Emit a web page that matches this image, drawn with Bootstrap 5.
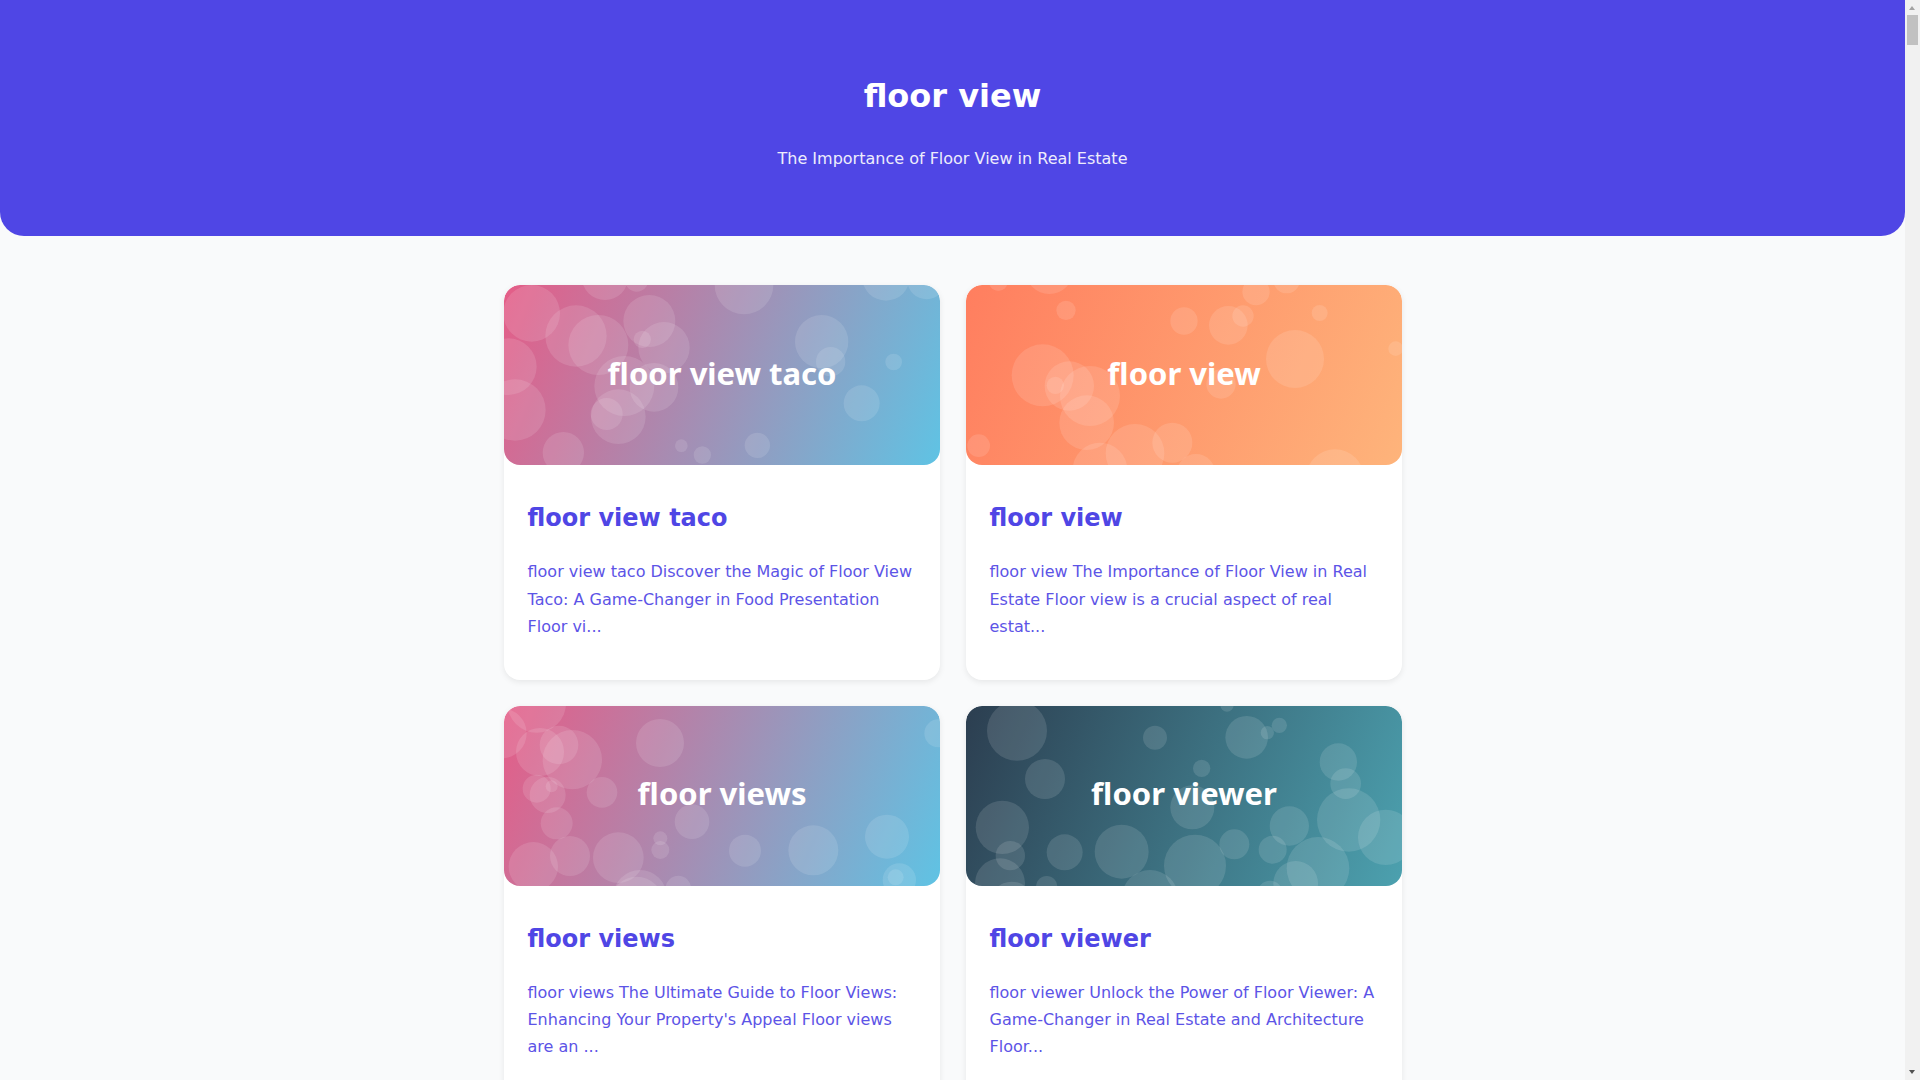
<!DOCTYPE html>
<html lang="en">
<head>
<meta charset="utf-8">
<title>floor view</title>
<link href="https://cdn.jsdelivr.net/npm/bootstrap@5.3.0/dist/css/bootstrap.min.css" rel="stylesheet">
<style>
body { background: #f9fafb; font-family: "DejaVu Sans", sans-serif; color: #4f46e5; line-height: 1.7; padding-right: 15px; }
.site-head { background: #4f46e5; color: #fff; border-radius: 0 0 24px 24px; height: 236px; padding-top: 13px; }
.site-head h1 { font-size: 32px; font-weight: 700; line-height: 1.2; margin: 0 0 29px; }
.site-head p { font-size: 16px; margin: 0; opacity: .9; }
.post-wrap { width: 898px; margin: 49px auto 0; display: grid; grid-template-columns: 1fr 1fr; gap: 25.6px 26px; }
.post { background: #fff; border-radius: 16px; box-shadow: 0 2px 6px rgba(0,0,0,.08); overflow: hidden; }
.post svg { display: block; width: 100%; height: 180px; border-radius: 16px; }
.post svg text { font-family: "Noto Sans", sans-serif; font-weight: 700; font-size: 93px; fill: #fff; text-anchor: middle; }
.post svg circle { fill: #fff; fill-opacity: .12; }
.post-body { padding: 24px; height: 215px; }
.post-body h2 { font-size: 24px; font-weight: 700; line-height: 1.2; margin: 15.2px 0 25.4px; color: #4f46e5; }
.post-body p { font-size: 16px; margin: 0; line-height: 27.2px; opacity: .92; }
.fake-scroll { position: fixed; top: 0; right: 0; width: 15px; height: 1080px; background: #f1f1f1; }
.fake-scroll i { display: block; position: absolute; left: 4px; width: 0; height: 0; border-left: 3.5px solid transparent; border-right: 3.5px solid transparent; }
.fake-scroll .arrow-up { top: 6px; border-bottom: 4px solid #a3a3a3; }
.fake-scroll .arrow-down { bottom: 6px; border-top: 4px solid #505050; }
.fake-scroll b { display: block; position: absolute; top: 15px; left: 2px; width: 11px; height: 30px; background: #c1c1c1; }
</style>
</head>
<body>
<header class="site-head d-flex flex-column align-items-center justify-content-center text-center">
  <h1>floor view</h1>
  <p>The Importance of Floor View in Real Estate</p>
</header>
<main class="post-wrap">
  <article class="post">
    <svg viewBox="72 75 1308 540" preserveAspectRatio="none" role="img" aria-label="floor view taco">
      <defs><linearGradient id="g1" gradientUnits="userSpaceOnUse" x1="72" y1="75" x2="1380" y2="615"><stop offset="0" stop-color="#e55d87"/><stop offset="1" stop-color="#5fc3e4"/></linearGradient></defs>
      <rect x="72" y="75" width="1308" height="540" fill="url(#g1)"/>
      <circle cx="155" cy="160" r="85"/><circle cx="288" cy="228" r="92"/><circle cx="355" cy="255" r="90"/><circle cx="508" cy="183" r="78"/><circle cx="552" cy="263" r="77"/><circle cx="487" cy="238" r="26"/><circle cx="375" cy="50" r="70"/><circle cx="470" cy="60" r="35"/><circle cx="792" cy="75" r="88"/><circle cx="1025" cy="245" r="80"/><circle cx="1052" cy="305" r="44"/><circle cx="1241" cy="306" r="25"/><circle cx="1218" cy="50" r="72"/><circle cx="1340" cy="60" r="58"/><circle cx="85" cy="320" r="85"/><circle cx="105" cy="450" r="92"/><circle cx="433" cy="378" r="90"/><circle cx="522" cy="382" r="73"/><circle cx="415" cy="470" r="82"/><circle cx="380" cy="462" r="48"/><circle cx="250" cy="578" r="62"/><circle cx="604" cy="557" r="19"/><circle cx="667" cy="585" r="26"/><circle cx="832" cy="556" r="38"/><circle cx="1145" cy="430" r="54"/>
      <text x="726" y="375">floor view taco</text>
    </svg>
    <div class="post-body">
      <h2>floor view taco</h2>
      <p>floor view taco Discover the Magic of Floor View Taco: A Game-Changer in Food Presentation Floor vi...</p>
    </div>
  </article>
  <article class="post">
    <svg viewBox="48 75 1308 540" preserveAspectRatio="none" role="img" aria-label="floor view">
      <defs><linearGradient id="g2" gradientUnits="userSpaceOnUse" x1="48" y1="75" x2="1356" y2="615"><stop offset="0" stop-color="#ff7e5f"/><stop offset="1" stop-color="#feb47b"/></linearGradient></defs>
      <rect x="48" y="75" width="1308" height="540" fill="url(#g2)"/>
      <circle cx="145" cy="65" r="28"/><circle cx="298" cy="30" r="72"/><circle cx="348" cy="151" r="29"/><circle cx="702" cy="183" r="41"/><circle cx="835" cy="196" r="58"/><circle cx="879" cy="168" r="32"/><circle cx="918" cy="95" r="41"/><circle cx="1010" cy="60" r="40"/><circle cx="1109" cy="159" r="24"/><circle cx="1035" cy="297" r="87"/><circle cx="1337" cy="266" r="22"/><circle cx="278" cy="346" r="93"/><circle cx="358" cy="378" r="74"/><circle cx="420" cy="408" r="90"/><circle cx="316" cy="376" r="26"/><circle cx="410" cy="488" r="82"/><circle cx="813" cy="372" r="44"/><circle cx="555" cy="580" r="88"/><circle cx="667" cy="548" r="60"/><circle cx="450" cy="630" r="82"/><circle cx="738" cy="640" r="58"/><circle cx="1155" cy="655" r="87"/><circle cx="86" cy="557" r="34"/>
      <text x="702" y="375">floor view</text>
    </svg>
    <div class="post-body">
      <h2>floor view</h2>
      <p>floor view The Importance of Floor View in Real Estate Floor view is a crucial aspect of real estat...</p>
    </div>
  </article>
  <article class="post">
    <svg viewBox="72 48 1308 540" preserveAspectRatio="none" role="img" aria-label="floor views">
      <defs><linearGradient id="g3" gradientUnits="userSpaceOnUse" x1="72" y1="48" x2="1380" y2="588"><stop offset="0" stop-color="#e55d87"/><stop offset="1" stop-color="#5fc3e4"/></linearGradient></defs>
      <rect x="72" y="48" width="1308" height="540" fill="url(#g3)"/>
      <circle cx="170" cy="40" r="88"/><circle cx="65" cy="130" r="75"/><circle cx="180" cy="186" r="72"/><circle cx="237" cy="165" r="58"/><circle cx="277" cy="209" r="89"/><circle cx="540" cy="159" r="72"/><circle cx="1375" cy="130" r="42"/><circle cx="170" cy="296" r="42"/><circle cx="203" cy="315" r="54"/><circle cx="215" cy="289" r="18"/><circle cx="366" cy="307" r="46"/><circle cx="230" cy="400" r="48"/><circle cx="636" cy="395" r="52"/><circle cx="541" cy="445" r="21"/><circle cx="541" cy="480" r="27"/><circle cx="795" cy="482" r="48"/><circle cx="1000" cy="481" r="75"/><circle cx="1221" cy="440" r="66"/><circle cx="160" cy="530" r="74"/><circle cx="270" cy="498" r="60"/><circle cx="415" cy="503" r="76"/><circle cx="480" cy="620" r="80"/><circle cx="470" cy="640" r="80"/><circle cx="595" cy="595" r="38"/><circle cx="1258" cy="570" r="50"/><circle cx="1247" cy="562" r="24"/>
      <text x="726" y="346">floor views</text>
    </svg>
    <div class="post-body">
      <h2>floor views</h2>
      <p>floor views The Ultimate Guide to Floor Views: Enhancing Your Property's Appeal Floor views are an ...</p>
    </div>
  </article>
  <article class="post">
    <svg viewBox="48 48 1308 540" preserveAspectRatio="none" role="img" aria-label="floor viewer">
      <defs><linearGradient id="g4" gradientUnits="userSpaceOnUse" x1="48" y1="48" x2="1356" y2="588"><stop offset="0" stop-color="#2c3e50"/><stop offset="1" stop-color="#4ca1af"/></linearGradient></defs>
      <rect x="48" y="48" width="1308" height="540" fill="url(#g4)"/>
      <circle cx="201" cy="122" r="90"/><circle cx="285" cy="267" r="60"/><circle cx="157" cy="412" r="80"/><circle cx="181" cy="497" r="44"/><circle cx="150" cy="580" r="75"/><circle cx="185" cy="640" r="65"/><circle cx="290" cy="590" r="32"/><circle cx="344" cy="487" r="54"/><circle cx="515" cy="485" r="81"/><circle cx="600" cy="625" r="85"/><circle cx="727" cy="352" r="66"/><circle cx="735" cy="527" r="93"/><circle cx="853" cy="463" r="45"/><circle cx="615" cy="143" r="36"/><circle cx="755" cy="235" r="26"/><circle cx="831" cy="45" r="20"/><circle cx="890" cy="142" r="64"/><circle cx="952" cy="128" r="20"/><circle cx="988" cy="106" r="23"/><circle cx="1165" cy="216" r="56"/><circle cx="1187" cy="281" r="46"/><circle cx="1196" cy="390" r="95"/><circle cx="1307" cy="442" r="83"/><circle cx="1018" cy="408" r="59"/><circle cx="968" cy="479" r="42"/><circle cx="1104" cy="535" r="94"/><circle cx="1037" cy="580" r="67"/><circle cx="960" cy="610" r="38"/>
      <text x="702" y="346">floor viewer</text>
    </svg>
    <div class="post-body">
      <h2>floor viewer</h2>
      <p>floor viewer Unlock the Power of Floor Viewer: A Game-Changer in Real Estate and Architecture Floor...</p>
    </div>
  </article>
</main>
<div class="fake-scroll" aria-hidden="true"><i class="arrow-up"></i><b></b><i class="arrow-down"></i></div>
<script src="https://cdn.jsdelivr.net/npm/bootstrap@5.3.0/dist/js/bootstrap.bundle.min.js"></script>
</body>
</html>
